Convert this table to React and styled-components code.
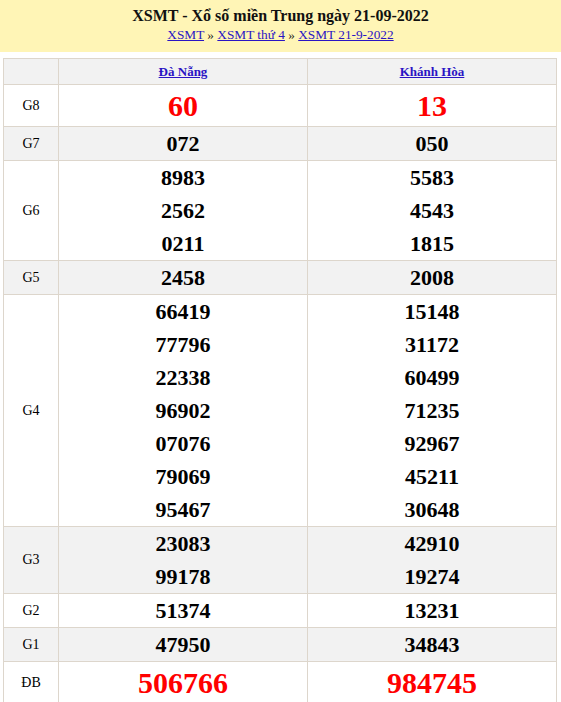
import styled, { createGlobalStyle } from "styled-components";

const GlobalStyle = createGlobalStyle`
  body {
    margin: 0;
    background: #fff;
    font-family: "Liberation Serif", "Times New Roman", serif;
  }
`;

const data = {
  provinces: ["Đà Nẵng", "Khánh Hòa"],
  rows: [
    { label: "G8", big: true, values: [["60"], ["13"]] },
    { label: "G7", values: [["072"], ["050"]] },
    { label: "G6", values: [["8983", "2562", "0211"], ["5583", "4543", "1815"]] },
    { label: "G5", values: [["2458"], ["2008"]] },
    {
      label: "G4",
      values: [
        ["66419", "77796", "22338", "96902", "07076", "79069", "95467"],
        ["15148", "31172", "60499", "71235", "92967", "45211", "30648"],
      ],
    },
    { label: "G3", values: [["23083", "99178"], ["42910", "19274"]] },
    { label: "G2", values: [["51374"], ["13231"]] },
    { label: "G1", values: [["47950"], ["34843"]] },
    { label: "ĐB", big: true, values: [["506766"], ["984745"]] },
  ],
};

function App() {
  return (
    <>
      <GlobalStyle />
      <Header>
        <Title>XSMT - Xổ số miền Trung ngày 21-09-2022</Title>
        <Crumbs>
          <a href="#">XSMT</a> » <a href="#">XSMT thứ 4</a> » <a href="#">XSMT 21-9-2022</a>
        </Crumbs>
      </Header>
      <Table>
        <thead>
          <tr>
            <HeadCell />
            {data.provinces.map((p) => (
              <HeadCell key={p}>
                <a href="#">{p}</a>
              </HeadCell>
            ))}
          </tr>
        </thead>
        <tbody>
          {data.rows.map((row, i) => (
            <Row key={row.label} $odd={i % 2 === 1}>
              <Label>{row.label}</Label>
              {row.values.map((list, j) => (
                <Cell key={j}>
                  {list.map((n) => (
                    <Num key={n} $big={row.big}>
                      {n}
                    </Num>
                  ))}
                </Cell>
              ))}
            </Row>
          ))}
        </tbody>
      </Table>
    </>
  );
}

export default App;

const Header = styled.div`
  background: #fff5b6;
  text-align: center;
  padding: 6px 0 8px;
  margin-bottom: 6px;
`;

const Title = styled.h1`
  margin: 0;
  font-size: 16px;
  line-height: 20px;
  font-weight: bold;
  color: #111;
`;

const Crumbs = styled.div`
  font-size: 13.3px;
  line-height: 18px;
  color: #222;

  a {
    color: #2a14c4;
  }
`;

const Table = styled.table`
  border-collapse: collapse;
  margin: 0 3px;
  width: calc(100% - 7px);
  table-layout: fixed;

  td,
  th {
    border: 1px solid #ddd6cc;
    text-align: center;
    padding: 0;
  }
`;

const HeadCell = styled.th`
  background: #f2f2f2;
  height: 25px;
  font-size: 13px;
  font-weight: bold;

  &:first-child {
    width: 54px;
  }

  a {
    color: #2a14c4;
  }
`;

const Row = styled.tr`
  background: ${(p) => (p.$odd ? "#f2f2f2" : "#fff")};
`;

const Label = styled.td`
  font-size: 14px;
  color: #000;
`;

const Cell = styled.td``;

const Num = styled.div`
  font-weight: bold;
  font-size: ${(p) => (p.$big ? "30px" : "22px")};
  line-height: ${(p) => (p.$big ? "41px" : "33px")};
  color: ${(p) => (p.$big ? "#ff0000" : "#000")};
`;
